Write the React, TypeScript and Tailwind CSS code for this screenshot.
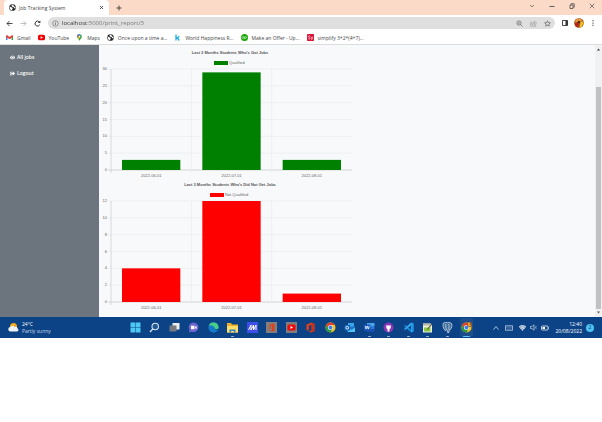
import type { ReactNode } from "react";
import { FaEye, FaSignOutAlt } from "react-icons/fa";

type IconProps = { className?: string };

function Svg({ className = "size-[11px]", box = "0 0 22 22", children }: IconProps & { box?: string; children: ReactNode }) {
  return (
    <svg viewBox={box} className={`shrink-0 ${className}`} fill="none" aria-hidden="true">
      {children}
    </svg>
  );
}

function Globe() {
  return (
    <Svg className="size-[7px]" box="0 0 14 14">
      <circle cx="7" cy="7" r="6.7" fill="#26282b" />
      <path d="M1.6 4.6 4 6.6l2.6.6 1 1.8-1.4 1.6.2 2.2C3.500 12.400 1.400 10 1.300 7Z" fill="#fff" />
      <path d="M6 1.300 9.400 1.800 8.800 3.600 10.400 5.200 12.900 6.200 12.600 8.800 10.600 8.600 9.800 6.400 6.800 5.600 5 4Z" fill="#fff" />
    </Svg>
  );
}

/* ---------- charts ---------- */

type Point = { label: string; value: number };
type ChartProps = { title: string; legend: string; color: string; max: number; step: number; data: Point[]; legendX: number };

function BarChart({ title, legend, color, max, step, data, legendX }: ChartProps) {
  const left = 12;
  const right = 253;
  const top = 24;
  const bottom = 125;
  const slot = (right - left) / data.length;
  const scale = (v: number) => bottom - (v / max) * (bottom - top);
  const ticks = Array.from({ length: max / step + 1 }, (_, i) => i * step);
  return (
    <svg viewBox="0 0 254 132" role="img" aria-label={title} className="block w-full max-w-[254px] font-['Liberation_Sans',Arial,sans-serif] text-[4px]">
      <text x="131" y="9" textAnchor="middle" fill="#555" fontWeight="700">{title}</text>
      <rect x={legendX} y="16" width="14" height="4" fill={color} />
      <text x={legendX + 15} y="19" fill="#666">{legend}</text>
      {ticks.map((t) => (
        <g key={t}>
          <line x1={left - 3} x2={right} y1={scale(t)} y2={scale(t)} stroke={t === 0 ? "#c4c6c8" : "#eaecee"} strokeWidth="0.7" />
          <text x={left - 4} y={scale(t) + 1} textAnchor="end" fill="#666">{t}</text>
        </g>
      ))}
      {[0, 1, 2].map((i) => (
        <line key={i} x1={left + i * slot} x2={left + i * slot} y1={top} y2={bottom + 3} stroke={i === 0 ? "#c9cbcd" : "#eaecee"} strokeWidth="0.7" />
      ))}
      {data.map((d, i) => (
        <g key={d.label}>
          <rect x={left + i * slot + 11} y={scale(d.value)} width={slot - 22} height={bottom - scale(d.value)} fill={color} />
          <text x={left + (i + 0.5) * slot} y={bottom + 7} textAnchor="middle" fill="#666">{d.label}</text>
        </g>
      ))}
    </svg>
  );
}

/* ---------- browser ---------- */

function TabStrip() {
  return (
    <header className="flex h-[15px] items-center bg-[#fcdac8] pl-1 text-[#444]">
      <div className="flex h-full w-[105px] items-center rounded-t-[4px] bg-white px-[5px]">
        <Globe />
        <span className="ml-[3px] flex-1 whitespace-nowrap">Job Tracking System</span>
        <button type="button" aria-label="Close tab">
          <Svg className="size-[5px]" box="0 0 10 10"><path d="m2 2 6 6M8 2 2 8" stroke="#333" strokeWidth="1.6" /></Svg>
        </button>
      </div>
      <button type="button" aria-label="New tab" className="ml-[7px]">
        <Svg className="size-[6px]" box="0 0 12 12"><path d="M6 1v10M1 6h10" stroke="#333" strokeWidth="1.7" /></Svg>
      </button>
      <div className="ml-auto flex items-center gap-[14px] pr-[7px] pb-[3px]">
        <button type="button" aria-label="Search tabs"><Svg className="size-[6px]" box="0 0 12 12"><path d="m2 4 4 4 4-4" stroke="#666" strokeWidth="1.500" /></Svg></button>
        <button type="button" aria-label="Minimize"><Svg className="size-[6px]" box="0 0 12 12"><path d="M1 7h10" stroke="#444" strokeWidth="1.700" /></Svg></button>
        <button type="button" aria-label="Restore"><Svg className="size-[6px]" box="0 0 12 12"><path d="M2 4h6v7H2zM4 3.500V1.500h6.500v7H8.500" stroke="#444" strokeWidth="1.500" /></Svg></button>
        <button type="button" aria-label="Close window"><Svg className="size-[6px]" box="0 0 12 12"><path d="m1.500 1.500 9 9m0-9-9 9" stroke="#444" strokeWidth="1.300" /></Svg></button>
      </div>
    </header>
  );
}

function Toolbar() {
  return (
    <div className="flex h-4 items-center bg-white pr-[6px] pl-[6px]">
      <nav className="flex items-center gap-[7px]">
        <button type="button" aria-label="Back"><Svg className="size-[7px]" box="0 0 14 14"><path d="M13 7H2M7 2 2 7l5 5" stroke="#333" strokeWidth="1.800" /></Svg></button>
        <button type="button" aria-label="Forward"><Svg className="size-[7px]" box="0 0 14 14"><path d="M1 7h11M7 2l5 5-5 5" stroke="#aaa" strokeWidth="1.500" /></Svg></button>
        <button type="button" aria-label="Reload"><Svg className="size-[7px]" box="0 0 14 14"><path d="M11.500 9.500A5 5 0 1 1 10.500 3.500" stroke="#333" strokeWidth="2" /><path d="M12.800 1v5H7.800Z" fill="#333" /></Svg></button>
      </nav>
      <div className="ml-[7px] flex h-3 flex-1 items-center rounded-full bg-[#dfdfdf] px-1">
        <Svg className="size-[7px]" box="0 0 14 14"><circle cx="7" cy="7" r="5.500" stroke="#666" strokeWidth="1.200" /><path d="M7 6v4M7 3.500V5" stroke="#666" strokeWidth="1.500" /></Svg>
        <input
          aria-label="Address"
          defaultValue="localhost:5000/print_report/3"
          className="ml-[3px] h-2 min-w-0 flex-1 bg-[linear-gradient(90deg,#333_25px,#757575_25px)] bg-clip-text text-[6px] text-transparent outline-none"
        />
        <div className="flex items-center gap-[7px]">
          <button type="button" aria-label="Zoom"><Svg className="size-[7px]" box="0 0 14 14"><circle cx="6" cy="6" r="4.200" stroke="#666" strokeWidth="1.500" /><path d="m9 9 4 4M4 6h4" stroke="#666" strokeWidth="1.600" /></Svg></button>
          <button type="button" aria-label="Share"><Svg className="size-[7px]" box="0 0 14 14"><path d="M4 4H1.500v8.500h10V10M4 9c.5-3 2.500-4.500 5-4.500V2l4 4-4 4V7.300C7 7.300 5.500 7.700 4 9Z" stroke="#888" strokeWidth="1.100" /></Svg></button>
          <button type="button" aria-label="Bookmark"><Svg className="size-[7px]" box="0 0 14 14"><path d="m7 1.500 1.700 3.700 4 .4-3 2.700.9 4L7 10.200l-3.600 2.100.9-4-3-2.700 4-.4Z" stroke="#555" strokeWidth="1.300" /></Svg></button>
        </div>
      </div>
      <div className="ml-[7px] flex items-center gap-[6px]">
        <button type="button" aria-label="Side panel"><Svg className="size-[6px]" box="0 0 12 12"><path d="M1 1h10v10H1z" stroke="#333" strokeWidth="1.800" /><path d="M7 1h4v10H7z" fill="#333" /></Svg></button>
        <button type="button" aria-label="Profile">
          <Svg className="size-[10px]" box="0 0 20 20">
            <circle cx="10" cy="10" r="9.700" fill="#a3521d" />
            <path d="M4 3.500C8 0 13 1 16 4l-3 3-4-2-4 4-3-1Z" fill="#e9a03a" />
            <path d="M2 11l5-3 3 4-2 7C4 18 1 15 2 11Z" fill="#b32620" />
            <path d="m13 8 4-2 2 5-4 7-4 1 1-6Z" fill="#f2c21c" />
            <path d="m8 6 4 1-1 4-3-1Z" fill="#4c160e" />
          </Svg>
        </button>
        <button type="button" aria-label="Menu"><Svg className="size-[6px]" box="0 0 12 12"><path d="M5 0h2v2.500H5zM5 4.800h2v2.500H5zM5 9.500h2V12H5z" fill="#444" /></Svg></button>
      </div>
    </div>
  );
}

const bookmarks: { label: string; icon: ReactNode }[] = [
  { label: "Gmail", icon: <Svg className="size-[7px]" box="0 0 14 14"><path d="M0 3v9h3V6Z" fill="#4285f4" /><path d="M14 3v9h-3V6Z" fill="#34a853" /><path d="M0 3.500 2 2l5 4 5-4 2 1.500V6L7 10.500 0 6Z" fill="#ea4335" /></Svg> },
  { label: "YouTube", icon: <Svg className="size-[7px]" box="0 0 14 14"><rect y="1.500" width="14" height="11" rx="3" fill="#f00000" /><path d="m5.300 4.500 4.700 2.500-4.700 2.500Z" fill="#fff" /></Svg> },
  { label: "Maps", icon: <Svg className="size-[7px]" box="0 0 14 14"><path d="M7 14C6 10 2.300 9 2.300 5A4.700 4.700 0 0 1 11.700 5C11.700 9 8 10 7 14Z" fill="#34a853" /><path d="M2.500 4A4.700 4.700 0 0 1 8.500.500L4 7.500C3 6.500 2.300 5.500 2.500 4Z" fill="#4285f4" /><path d="M3.200 7.800 6 4.800l2 2-3.200 3.500Z" fill="#fbbc04" /><path d="m3.500 1.700 2.500 2L4 6.500 2.400 5Z" fill="#ea4335" /><circle cx="7" cy="5" r="1.600" fill="#fff" /></Svg> },
  { label: "Once upon a time a...", icon: <Globe /> },
  { label: "World Happiness R...", icon: <Svg className="size-[7px]" box="0 0 14 14"><path d="M4 1v12M10.500 4.500 5 9M6.500 7.500l4 5.500" stroke="#20aee3" strokeWidth="2.600" /></Svg> },
  { label: "Make an Offer - Up...", icon: <Svg className="size-[7px]" box="0 0 14 14"><circle cx="7" cy="7" r="7" fill="#14a800" /><path d="M2.500 5v2.500c0 2 3 2 3 0V5c1 2 2 3.500 3.700 3.500 2.500 0 2.500-3.300.3-3.300C7.500 5.200 7.500 8 7 10.500" stroke="#fff" strokeWidth="1.100" /></Svg> },
  { label: "simplify 3+2*(4+7)...", icon: <Svg className="size-[7px]" box="0 0 14 14"><rect width="14" height="14" rx="1.500" fill="#db1436" /><path d="M6.500 4.500C5 3 2.500 3.500 2.700 5.200 3 7 6.500 6.500 6.300 8.800 6 10.500 3.500 10.500 2.300 9.300M8 5.500l2 4M12 5.500l-3 6.500" stroke="#fff" strokeWidth="1.200" /></Svg> },
];

function Bookmarks() {
  return (
    <nav aria-label="Bookmarks" className="flex h-[14px] items-center gap-[7px] overflow-hidden border-b border-[#dcdcdc] bg-white px-[6px] text-[#444]">
      {bookmarks.map((b) => (
        <a key={b.label} href="#" className="flex shrink-0 items-center gap-1 whitespace-nowrap">
          {b.icon}
          {b.label}
        </a>
      ))}
    </nav>
  );
}

function Page() {
  return (
    <div className="flex bg-[#f8f9fa]">
      <aside className="flex w-[99px] shrink-0 flex-col gap-2 bg-[#6c757d] px-[10px] pt-2 font-semibold text-white">
        <a href="#" className="flex h-2 items-center gap-[2px]"><FaEye className="size-[5px]" />All jobs</a>
        <a href="#" className="flex h-2 items-center gap-[2px]"><FaSignOutAlt className="size-[5px]" />Logout</a>
      </aside>
      <main className="min-w-0 flex-1 pb-2">
        <BarChart title="Last 3 Months Students Who's Got Jobs" legend="Qualified" legendX={115} color="#008000" max={30} step={5}
          data={[{ label: "2022-06-01", value: 3 }, { label: "2022-07-01", value: 29 }, { label: "2022-08-01", value: 3 }]} />
        <BarChart title="Last 3 Months Students Who's Did Not Get Jobs" legend="Not Qualified" legendX={111} color="#ff0000" max={12} step={2}
          data={[{ label: "2022-06-01", value: 4 }, { label: "2022-07-01", value: 12 }, { label: "2022-08-01", value: 1 }]} />
      </main>
      <div className="flex w-[7px] shrink-0 flex-col items-center bg-[#f1f1f1] py-[3px]">
        <Svg className="size-[3px]" box="0 0 6 6"><path d="M0 5h6L3 1Z" fill="#333" /></Svg>
        <div className="mt-9 mb-[2px] w-[5px] flex-1 bg-[#c1c1c1]" />
        <Svg className="size-[3px]" box="0 0 6 6"><path d="M0 1h6L3 5Z" fill="#555" /></Svg>
      </div>
    </div>
  );
}

/* ---------- taskbar ---------- */

function ChromeMark() {
  return (
    <>
      <circle cx="11" cy="11" r="10" fill="#fbc116" />
      <path d="M2.300 6A10 10 0 0 1 19.700 6H11L6.500 13Z" fill="#e33b2e" />
      <path d="M2.300 6A10 10 0 0 0 11 21l4.500-7.500-8.500.5Z" fill="#279847" />
      <circle cx="11" cy="11" r="5" fill="#fff" />
      <circle cx="11" cy="11" r="3.900" fill="#3b80ec" />
    </>
  );
}

const apps: { name: string; art: ReactNode; running?: boolean; active?: boolean }[] = [
  { name: "Start", art: <path d="M1 1h9.500v9.500H1zM11.500 1H21v9.500h-9.500zM1 11.500h9.500V21H1zM11.500 11.500H21V21h-9.500z" fill="#4dc8f5" /> },
  { name: "Search", art: <><circle cx="12.500" cy="9" r="6.500" fill="#24578f" stroke="#d9e5ef" strokeWidth="2.200" /><path d="m7.500 14-5.500 6" stroke="#d9e5ef" strokeWidth="2.600" /></> },
  { name: "Task view", art: <><path d="M7 2h14v13H7z" fill="#ececec" /><path d="M1 7h14v12H1z" fill="#777a80" /></> },
  { name: "Chat", art: <><path d="M11 1a10 9.500 0 1 1-4 18.300L2 21l1-5.500A10 9.500 0 0 1 11 1Z" fill="#7065ce" /><path d="M6 7.500h7v7H6zM14 10l3-2.500v7L14 12Z" fill="#fff" /></> },
  { name: "Edge", art: <><circle cx="11" cy="11" r="10" fill="#1687d0" /><path d="M1.500 8A10 10 0 0 1 21 11c0 4-5 5-8 3 3-5-6-9-11.500-6Z" fill="#49cf83" /><path d="M2 8c5-3 9 0 8 4-1 4 3 6 8 5-4 7-17 4-16-9Z" fill="#1679ce" /><path d="M11 11c-1 3 2 5 7 5 1-1 2-2 2-3-2 2-8 2-9-2Z" fill="#0b448a" /></> },
  { name: "File Explorer", running: true, art: <><path d="M0 2h8l2 3h12v16H0z" fill="#eeb125" /><path d="M0 8h22v13H0z" fill="#ffdc68" /><path d="M5 15h12v6h-3v-3H8v3H5z" fill="#2b86ca" /></> },
  { name: "Monitor", art: <><path d="M0 0h22v22H0z" fill="#3e4ee8" /><path d="m3 16 5-10v10l5-10v10l5-10v10" stroke="#fff" strokeWidth="2" /></> },
  { name: "Office shortcut", art: <><path d="M0 0h22v22H0z" fill="#857e7b" /><path d="m7 6 6-3 4 2v12l-4 2-6-3 5 .500V6.500L9 8v6l-3 1Z" fill="#dc4218" /></> },
  { name: "YouTube shortcut", art: <><path d="M0 0h22v22H0z" fill="#827b7b" /><rect x="3" y="5" width="16" height="12" rx="3" fill="#ef0909" /><path d="m9 8 5 3-5 3Z" fill="#fff" /></> },
  { name: "Office", art: <><path d="m3 5 10-4 6 3v14l-6 3-9-4 9 1V5L8 7v8l-5 2Z" fill="#e23f18" /><path d="m13 1 6 3v14l-6 3Z" fill="#c9301a" /></> },
  { name: "Chrome", art: <ChromeMark /> },
  { name: "Outlook", art: <><path d="M8 2h12v10H8z" fill="#38a6e8" /><path d="M6 9h16v11H6z" fill="#1d76cc" /><path d="m8 12 7 4 7-5v9H8Z" fill="#54c3f1" /><path d="M1 6h11v11H1z" fill="#1063b6" /><circle cx="6.500" cy="11.500" r="2.800" stroke="#fff" strokeWidth="1.700" /></> },
  { name: "Word", running: true, art: <><path d="M6 2h15v6H6z" fill="#4ba6ed" /><path d="M6 8h15v6H6z" fill="#2b7cd3" /><path d="M6 14h15v6H6z" fill="#184fae" /><path d="M0 5h13v12H0z" fill="#185abd" /><path d="m2.500 8 1.800 6L6.500 8l2.200 6 1.800-6" stroke="#fff" strokeWidth="1.600" /></> },
  { name: "GitHub Desktop", running: true, art: <><circle cx="11" cy="11" r="10" fill="#8a35b5" /><path d="M7 6l2.500 1h3L15 6l.500 3.500c.500 3.500-1.500 4.500-2.500 4.500v5H9v-5c-1 0-3-1-2.500-4.500Z" fill="#fff" /></> },
  { name: "VS Code", running: true, art: <><path d="m16 1 5 2v16l-5 2L2 8l2-2 12 9Z" fill="#1688d4" /><path d="M16 1 2 14l2 2 12-9Z" fill="#36a7ef" /><path d="m16 1 5 2v16l-5 2Z" fill="#219be9" /></> },
  { name: "Notepad++", running: true, art: <><path d="M2 3h15l3 4v14H2z" fill="#e9f0dc" /><path d="M2 3h15v4H2z" fill="#b9b7a3" /><path d="M4 11h13v8H4z" fill="#8ac743" /><path d="m19 6-7 9-2 1 1-3 6-8Z" fill="#675b30" /></> },
  { name: "pgAdmin", running: true, art: <><path d="M3 2c5-2 13-2 16 1 2 4 0 9-2 12l-3 1v5h-3l-1-6-4 2C2 12 1 6 3 2Z" fill="#416e9d" stroke="#d4dfe9" strokeWidth="1.500" /><path d="M8 4c-1 4-1 8 1 10M13 4c2 4 1 8 0 11" stroke="#d4dfe9" strokeWidth="1.500" /></> },
  { name: "Chrome profile", active: true, art: <><ChromeMark /><circle cx="17" cy="5" r="5" fill="#a45a20" /><path d="m14 2 4-1-1 4 3 2-5 2Z" fill="#e4b448" /></> },
];

function Taskbar() {
  return (
    <footer className="flex h-[21px] items-center bg-[#0c4386] text-white">
      <button type="button" className="flex min-w-0 flex-1 items-center gap-[3px] pl-2 text-left">
        <Svg className="size-[11px]">
          <circle cx="11" cy="9" r="7" fill="#f6a81c" />
          <path d="M5 19a4.500 4.500 0 0 1 0-9c1.500-4 7-3 8 0 4-1 6 1 6 3 3 1 2 6-1 6Z" fill="#eef2f7" />
        </Svg>
        <span className="leading-[7px] whitespace-nowrap">24°C<br /><span className="text-[#c5d5e8]">Partly sunny</span></span>
      </button>
      <div className="flex h-full w-[344px] shrink-0 items-center justify-between">
        {apps.map((a) => (
          <button key={a.name} type="button" aria-label={a.name} className={`flex h-[19px] w-[13px] flex-col items-center justify-between pt-1 ${a.active ? "rounded-[2px] bg-[#1d4f8d]" : ""}`}>
            <Svg className="size-[11px]">{a.art}</Svg>
            <span className={`h-px rounded-full ${a.active ? "w-[7px] bg-[#5cc3f5]" : a.running ? "w-[3px] bg-[#9fb2c8]" : "w-0"}`} />
          </button>
        ))}
      </div>
      <div className="flex min-w-0 flex-1 items-center justify-end pr-2">
        <div className="flex items-center gap-1">
          <Svg className="mr-[2px] size-[6px]" box="0 0 12 12"><path d="m1 9 5-6 5 6" stroke="#e1e9f2" strokeWidth="1.500" /></Svg>
          <Svg className="mr-[2px] h-[6px] w-2" box="0 0 16 12"><path d="M1 1.500h14v9H1z" stroke="#e1e9f2" strokeWidth="1.300" /><path d="M3 4h10M3 6h10M5 8.500h6" stroke="#e1e9f2" strokeDasharray="1.300 1" /></Svg>
          <Svg className="h-[6px] w-[7px]" box="0 0 14 12"><path d="M0 4a10 10 0 0 1 14 0L7 12Z" fill="#8fa9c8" /><path d="M0 4a10 10 0 0 1 14 0M3 7a6 6 0 0 1 8 0M7 11V9" stroke="#fff" strokeWidth="1.500" /></Svg>
          <Svg className="h-[7px] w-[7px]" box="0 0 14 14"><path d="M1 5h3l4-3.500v11L4 9H1Z" stroke="#e1e9f2" strokeWidth="1.200" /><path d="M10 5q2 2 0 4" stroke="#e1e9f2" strokeWidth="1.200" /><path d="M12 3q3 4 0 8" stroke="#7f9cbd" strokeWidth="1" /></Svg>
          <Svg className="h-[6px] w-2" box="0 0 16 12"><rect x="1" y="2" width="13" height="8" rx="1.500" stroke="#fff" strokeWidth="1.500" /><path d="M3 4h5v4H3zM15 4.500h1v3h-1z" fill="#fff" /></Svg>
        </div>
        <div className="ml-[6px] text-right leading-[7px]">12:40<br />20/08/2022</div>
        <span className="ml-1 flex size-2 shrink-0 items-center justify-center rounded-full bg-[#4cc2f5] leading-none text-[#123a63]">2</span>
      </div>
    </footer>
  );
}

export default function App() {
  return (
    <div className="min-h-screen bg-white font-['Open_Sans','Noto_Sans',sans-serif] text-[5px] leading-[8px]">
      <TabStrip />
      <Toolbar />
      <Bookmarks />
      <Page />
      <Taskbar />
    </div>
  );
}
